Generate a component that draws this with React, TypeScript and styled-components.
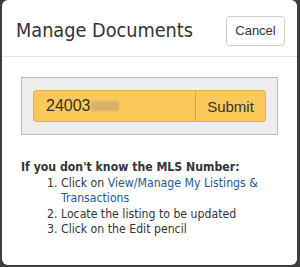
import { createGlobalStyle } from 'styled-components'
import styled from 'styled-components'

const Global = createGlobalStyle`
  html, body {
    margin: 0;
    padding: 0;
    background: #3d3d3d;
  }
`

const Modal = styled.div`
  box-sizing: border-box;
  width: 295px;
  height: 265px;
  margin-left: 2px;
  background: #fff;
  border-radius: 6px;
  font-family: "DejaVu Sans Condensed", "DejaVu Sans", Verdana, sans-serif;
  font-stretch: condensed;
  color: #333;
  overflow: hidden;
`

const Header = styled.div`
  display: flex;
  align-items: center;
  justify-content: space-between;
  height: 57px;
  padding: 5px 12px 0 14px;
  border-bottom: 1px solid #e5e5e5;
  box-sizing: border-box;
`

const Title = styled.h1`
  margin: 0;
  font-size: 19.7px;
  font-weight: normal;
  color: #333;
`

const CancelButton = styled.button`
  font-family: "Liberation Sans", Arial, sans-serif;
  font-size: 13px;
  color: #333;
  background: #fff;
  border: 1px solid #ccc;
  border-radius: 4px;
  width: 59px;
  height: 30px;
  padding: 0;
`

const Body = styled.div`
  padding: 20px 19px 0 19px;
`

const Well = styled.div`
  background: #eee;
  border: 1px solid #bbb;
  padding: 12px 11px;
`

const InputGroup = styled.div`
  display: flex;
  height: 32px;
  background: #f9c95c;
  border: 1px solid #e0b24c;
  border-radius: 3px;
  box-sizing: border-box;
`

const MlsInput = styled.div`
  flex: 1;
  display: flex;
  align-items: center;
  padding-left: 12px;
  font-family: "Liberation Sans", Arial, sans-serif;
  font-size: 16px;
  color: #3a3020;
  border-right: 1px solid #d6a946;
`

const Blur = styled.span`
  display: inline-block;
  width: 28px;
  height: 10px;
  background: #d9b06a;
  filter: blur(1px);
`

const SubmitButton = styled.div`
  width: 69px;
  display: flex;
  align-items: center;
  justify-content: center;
  font-family: "Liberation Sans", Arial, sans-serif;
  font-size: 15px;
  color: #333;
`

const Help = styled.div`
  margin-top: 25px;
  font-size: 12.2px;
  line-height: 15.5px;
`

const HelpTitle = styled.div`
  font-weight: bold;
`

const Steps = styled.ol`
  margin: 0;
  padding-left: 40px;
`

const Link = styled.a`
  color: #245a8d;
  text-decoration: none;
`

export default function App() {
  return (
    <>
      <Global />
      <Modal>
        <Header>
          <Title>Manage Documents</Title>
          <CancelButton>Cancel</CancelButton>
        </Header>
        <Body>
          <Well>
            <InputGroup>
              <MlsInput>
                24003<Blur />
              </MlsInput>
              <SubmitButton>Submit</SubmitButton>
            </InputGroup>
          </Well>
          <Help>
            <HelpTitle>If you don't know the MLS Number:</HelpTitle>
            <Steps>
              <li>
                Click on <Link href="#">View/Manage My Listings &amp; Transactions</Link>
              </li>
              <li>Locate the listing to be updated</li>
              <li>Click on the Edit pencil</li>
            </Steps>
          </Help>
        </Body>
      </Modal>
    </>
  )
}
